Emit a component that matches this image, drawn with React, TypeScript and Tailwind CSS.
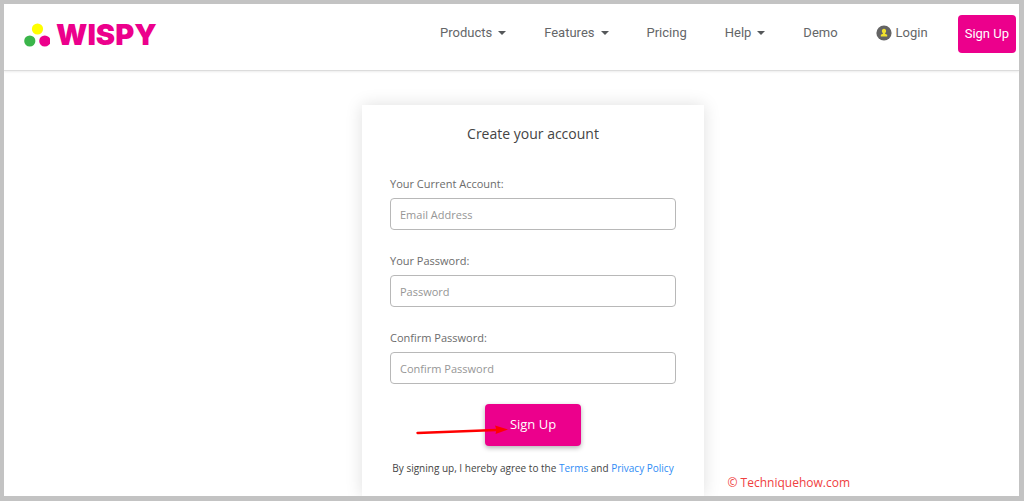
import React from "react";

const NAV_LINK = "flex items-center gap-1.5 whitespace-nowrap text-[13px] leading-5 text-[#646668]";

function Caret() {
  return (
    <svg width="8" height="4" viewBox="0 0 8 4" aria-hidden="true">
      <path d="M0 0h8L4 4z" fill="#55585a" />
    </svg>
  );
}

function Logo() {
  return (
    <a href="#" className="flex items-center gap-1.5">
      <svg width="26" height="24" viewBox="0 0 26 24" aria-hidden="true">
        <circle cx="13.5" cy="6" r="5.6" fill="#ffff00" />
        <circle cx="5.8" cy="18" r="5.6" fill="#3bb54a" />
        <circle cx="20.8" cy="18" r="5.6" fill="#ec008c" />
      </svg>
      <span className="font-['Inter',sans-serif] text-[29px] leading-[22px] font-black text-[#ec008c]">WISPY</span>
    </a>
  );
}

function UserBadge() {
  return (
    <svg width="16" height="16" viewBox="0 0 16 16" aria-hidden="true">
      <circle cx="8" cy="8" r="7.6" fill="#646464" />
      <path
        d="M8 3.800c-1.400 0-2.100 1-2.100 2.200 0 .9.400 1.700 1 2.100v.7L4.800 9.700v1.900h6.400V9.700l-2.100-.9v-.7c.6-.4 1-1.200 1-2.100C10.100 4.800 9.400 3.800 8 3.800z"
        fill="#f0e12d"
      />
    </svg>
  );
}

function Header() {
  return (
    <header className="flex h-[67px] shrink-0 justify-between border-b border-[#dcdcdc] pr-[3px] pl-5 shadow-[0_1px_2px_rgba(0,0,0,0.08)]">
      <div className="pt-[19px]">
        <Logo />
      </div>
      <nav className="flex items-start font-['Roboto',sans-serif]">
        <div className="flex gap-[38px] pt-[19px] pr-[30px]">
          <a href="#products" className={NAV_LINK}>Products <Caret /></a>
          <a href="#features" className={NAV_LINK}>Features <Caret /></a>
          <a href="#pricing" className={NAV_LINK}>Pricing</a>
          <a href="#help" className={NAV_LINK}>Help <Caret /></a>
          <a href="#demo" className={NAV_LINK}>Demo</a>
          <a href="#login" className="flex items-center gap-1 text-[13px] leading-5 text-[#646668]">
            <UserBadge /> Login
          </a>
        </div>
        <button type="button" className="mt-[11px] h-[38px] rounded bg-[#ec008c] px-[7px] text-[13px] whitespace-nowrap text-white">
          Sign Up
        </button>
      </nav>
    </header>
  );
}

type FieldProps = { id: string; label: string; type: string; placeholder: string };

function Field({ id, label, type, placeholder }: FieldProps) {
  return (
    <div className="flex flex-col gap-1">
      <label htmlFor={id} className="text-[11px] leading-5 text-[#6c6c6c]">{label}</label>
      <input
        id={id}
        type={type}
        placeholder={placeholder}
        className="h-8 w-full rounded border border-[#b8b8b8] bg-white px-[9px] text-[11px] text-[#444] placeholder:text-[#969696]"
      />
    </div>
  );
}

function SignUpForm() {
  return (
    <form className="flex w-[342px] flex-col px-7 pt-[19px] shadow-[0_0_16px_rgba(0,0,0,0.13)]">
      <h1 className="text-center text-[14px] leading-5 text-[#444]">Create your account</h1>
      <div className="mt-[30px] flex flex-col gap-[21px]">
        <Field id="email" label="Your Current Account:" type="email" placeholder="Email Address" />
        <Field id="password" label="Your Password:" type="password" placeholder="Password" />
        <Field id="confirm" label="Confirm Password:" type="password" placeholder="Confirm Password" />
      </div>
      <div className="relative mt-5 flex justify-center">
        <button type="button" className="h-[42px] w-24 rounded bg-[#ec008c] text-[13px] text-white shadow-[0_2px_5px_rgba(0,0,0,0.3)]">
          Sign Up
        </button>
        <svg className="absolute top-5 left-[26px]" width="94" height="12" viewBox="0 0 94 12" aria-hidden="true">
          <path d="M1.500 9 80 6" stroke="#ff0000" strokeWidth="2.400" strokeLinecap="round" />
          <path d="M79 1.500 92 5.500 79.500 10 80.500 5.800z" fill="#ff0000" />
        </svg>
      </div>
      <p className="mt-3 text-center text-[10px] leading-5 whitespace-nowrap text-[#444]">
        By signing up, I hereby agree to the <a href="#terms" className="text-[#2f8cf5]">Terms</a> and{" "}
        <a href="#privacy" className="text-[#2f8cf5]">Privacy Policy</a>
      </p>
    </form>
  );
}

export default function App() {
  return (
    <div className="flex h-screen flex-col overflow-hidden border-4 border-r-5 border-b-5 border-[#c3c3c3] bg-white font-['Open_Sans','Noto_Sans',sans-serif]">
      <Header />
      <main className="relative flex min-h-0 flex-1 justify-center pt-[34px] pr-px pl-[44px]">
        <SignUpForm />
        <p className="absolute right-[169px] bottom-[3px] text-[12px] leading-5 text-[#f04040]">© Techniquehow.com</p>
      </main>
    </div>
  );
}
